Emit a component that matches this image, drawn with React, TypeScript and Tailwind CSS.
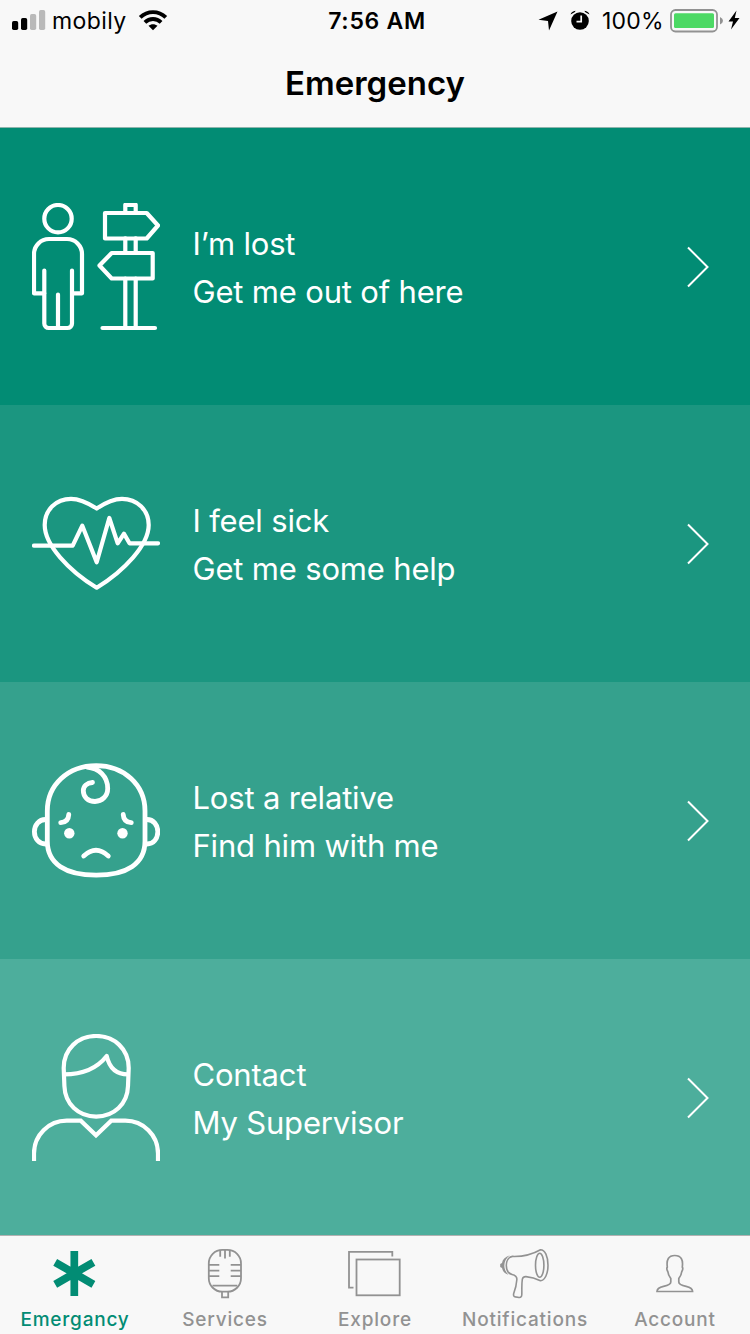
import React from 'react'

const LostIcon = () => (
  <svg
    viewBox="0 0 128 128"
    className="size-32 shrink-0"
    fill="none"
    stroke="currentColor"
    strokeWidth="4.2"
    strokeLinecap="round"
    strokeLinejoin="round"
  >
    <circle cx="26" cy="15.7" r="13.7" />
    <path d="M12.3 67.5V120.5a4.5 4.5 0 0 0 4.5 4.5H35.5a4.5 4.5 0 0 0 4.5-4.5V67.5M26 91.5V125" />
    <path d="M12.3 90.3H2V51a15 15 0 0 1 15-15H35a15 15 0 0 1 15 15V90.3H40" />
    <path d="M93.3 10V1.8H103.7V10M93.3 35.3V50M103.7 35.3V50M93.3 75.5V125M103.7 75.5V125" />
    <path d="M73 10H114.7L126 22.5L114.7 35.5H73Z" />
    <path d="M120.7 50H79.7L67.5 62.5L79.7 75.5H120.7Z" />
    <path d="M70.5 125H123" />
  </svg>
)

const HeartIcon = () => (
  <svg
    viewBox="0 0 128 128"
    className="size-32 shrink-0"
    fill="none"
    stroke="currentColor"
    strokeWidth="4.2"
    strokeLinecap="round"
    strokeLinejoin="round"
  >
    <path d="M64.7 28.5C56 23 47 18.9 39 18.9C24 18.9 12.7 30 12.7 45C12.7 65 37 91 64.7 107.7C92 91 116.7 65 116.7 45C116.7 30 105 18.9 90 18.9C82 18.9 73 23 64.7 28.5Z" />
    <path d="M2 65.6H40.7L50.3 45.7L64.7 82.3L77.3 38L85.7 63.3L92 53.7L97.5 63.3H126" />
  </svg>
)

const ChildIcon = () => (
  <svg
    viewBox="0 0 128 128"
    className="size-32 shrink-0"
    fill="none"
    stroke="currentColor"
    strokeWidth="4.8"
    strokeLinecap="round"
  >
    <path d="M64.2 8.7C36 8.7 15.3 28 15.3 54V84C15.3 107 34 118.2 64.2 118.2S113 107 113 84V54C113 28 92 8.7 64.2 8.7Z" />
    <path d="M13.5 62.5C7 62.5 2.4 68 2.4 74.8S7 87 13.5 87M115 62.5C121.5 62.5 125.8 68 125.8 74.8S121.5 87 115 87" />
    <path d="M55 10C67 11 75.7 19.5 75.7 31.5C75.7 39 70 44.5 63 44.5C56 44.5 51.3 39.8 51.3 33.8C51.3 29 55 25.8 60.5 25.5" />
    <path d="M36.8 57.5Q36.3 65.3 28.7 65.7M91.2 57.5Q91.7 65.3 99.3 65.7M51.7 99Q64 87.5 76.3 99" />
    <circle cx="37.3" cy="76.3" r="5.2" fill="currentColor" stroke="none" />
    <circle cx="90.5" cy="76.3" r="5.2" fill="currentColor" stroke="none" />
  </svg>
)

const SupervisorIcon = () => (
  <svg viewBox="0 0 128 128" className="size-32 shrink-0" fill="none" stroke="currentColor" strokeWidth="4.2">
    <path d="M31.7 34C31.7 15 46 2 64.2 2S96.7 15 96.7 34L96 52C95.5 70 82 82.6 64.2 82.6S33 70 32.4 52Z" />
    <path d="M32 40.4C50 40.4 65 34.5 74.7 22C77.5 34.5 85 40.4 96 40.4" strokeLinejoin="round" />
    <path d="M2 127V119.4A32.7 32.7 0 0 1 34.7 86.7H48.7L64 101.3L79.3 86.7H93.3A32.7 32.7 0 0 1 126 119.4V127" />
  </svg>
)

const AsteriskIcon = () => (
  <svg viewBox="0 0 60 56" className="h-14 w-[60px]" stroke="currentColor" strokeWidth="7.7">
    <path d="M29.3 6V51M10.2 39.3L48.4 17.3M10.2 17.3L48.4 39.3" />
  </svg>
)

const MicIcon = () => (
  <svg viewBox="0 0 60 56" className="h-14 w-[60px]" fill="none" stroke="currentColor" strokeWidth="1.8">
    <rect x="13.8" y="4.9" width="32.2" height="41.8" rx="13.5" />
    <path d="M17.5 40.7H42.3M14 19.8H24.3M14 25.7H24.3M14 31.2H24.3M35.7 19.8H46M35.7 25.7H46M35.7 31.2H46" />
    <path d="M25.2 5V11.7M30 5V13.5M34.8 5V11.7M27 46.7V52.3H33.2V46.7" />
  </svg>
)

const ExploreIcon = () => (
  <svg viewBox="0 0 60 56" className="h-14 w-[60px]" fill="none" stroke="currentColor" strokeWidth="1.8">
    <path d="M8.5 42.7H4V6.9H47.3V11.5" />
    <rect x="11.5" y="14.5" width="43.2" height="35.8" />
  </svg>
)

const MegaphoneIcon = () => (
  <svg
    viewBox="0 0 60 56"
    className="h-14 w-[60px]"
    fill="none"
    stroke="currentColor"
    strokeWidth="1.6"
    strokeLinejoin="round"
  >
    <path d="M45.5 4.7C38 9 28 11.7 17.5 11.4C13.5 12 11.3 16 11.3 20.5C11.3 25 13 28.5 17 29.5C20.5 30.3 22.3 32 21.8 35C21.5 40 20 45 18.7 48.5C18.2 50.5 18.8 51.5 20.5 51.9L24 52.5C26 52.7 26.7 51.5 26.8 49.5C27 44 26.5 40 27.3 34.5C27.6 32 28.5 31.5 31 31.6C36 32 41 33.5 45.5 35.8C50 35.5 53 28.5 53 20.2C53 11.5 50 4.7 45.5 4.7Z" />
    <ellipse cx="44.7" cy="20.3" rx="4.2" ry="12" />
    <path
      d="M14.8 10.2C10 11.8 7.5 14.5 7 18L5.2 19V22L7 23C7.8 26.5 10 29 13.5 29.8C7.5 24 8 15.5 14.8 10.2Z"
      fill="currentColor"
      stroke="none"
    />
  </svg>
)

const AccountIcon = () => (
  <svg viewBox="0 0 60 56" className="h-14 w-[60px]" fill="none" stroke="currentColor" strokeWidth="1.7">
    <path d="M12 46.5C12 43.5 15 42 18.5 41.3C23 40.4 25.8 39.5 25.8 37V33.5C24 31 23 29 22.8 26.5C21.7 25 21.5 23.5 22.3 22C21.3 14.5 23.5 10.5 29.8 10.5S38.3 14.5 37.3 22C38.1 23.5 37.9 25 36.8 26.5C36.6 29 35.6 31 33.8 33.5V37C33.8 39.5 36.6 40.4 41.1 41.3C44.6 42 47.6 43.5 47.6 46.5Z" />
  </svg>
)

const StatusBar = () => (
  <div className="flex h-[42px] items-center">
    {/* Carrier */}
    <div className="flex w-[270px] items-center pl-3">
      <svg viewBox="0 0 34 22" className="mb-0.5 h-[22px] w-[34px]">
        <rect x="0" y="12" width="6.2" height="9" rx="1.7" />
        <rect x="9" y="9" width="6.2" height="12" rx="1.7" />
        <rect x="18" y="5" width="6.2" height="16" rx="1.7" fill="#b9b9b9" />
        <rect x="27" y="1" width="6.2" height="20" rx="1.7" fill="#b9b9b9" />
      </svg>
      <span className="ml-1.5 w-[74px] text-[23px] tracking-[0.4px]">mobily</span>
      <svg viewBox="0 0 30 22" className="mb-0.5 ml-3 h-[22px] w-[30px]" fill="none" stroke="#000" strokeWidth="3.9">
        <path d="M2.2 8.4C9.5 1.3 20.5 1.3 27.8 8.4M6.9 13.3C11.5 8.9 18.5 8.9 23.1 13.3" />
        <path d="M15 21.2L10.5 16.8C13 14.6 17 14.6 19.5 16.8Z" fill="#000" stroke="none" />
      </svg>
    </div>
    <span className="w-[214px] text-center text-[23px] font-semibold tracking-[0.7px]">7:56 AM</span>
    {/* Indicators */}
    <div className="flex flex-1 items-center justify-end pr-[10px]">
      <svg viewBox="0 0 20 20" className="mr-px size-5">
        <path d="M19.5 0.5L11 19.5L10 10L0.5 8.8Z" />
      </svg>
      <svg viewBox="0 0 20 20" className="mb-0.5 ml-[11px] size-5">
        <circle cx="10" cy="11" r="8.8" />
        <path d="M0.5 4.5Q1.5 1.2 5.5 0.8L5 2ZM19.5 4.5Q18.5 1.2 14.5 0.8L15 2Z" />
        <path d="M11.2 5.5V11.6H6.5" fill="none" stroke="#f8f8f8" strokeWidth="1.7" />
      </svg>
      <span className="ml-3 w-[64px] text-[23px] tracking-[0.2px]">100%</span>
      <svg viewBox="0 0 54 24" className="ml-1 h-6 w-[54px]">
        <rect x="1" y="1" width="46" height="21.5" rx="4.5" fill="none" stroke="#929292" strokeWidth="1.8" />
        <rect x="4" y="4.3" width="40" height="14.8" rx="1.5" fill="#4cd964" />
        <path d="M50 8Q53 9.5 53 11.7T50 15.5Z" fill="#929292" />
      </svg>
      <svg viewBox="0 0 12 20" className="mb-0.5 ml-1 h-5 w-3">
        <path d="M8.5 0.5L0.5 11.5H5L3 19.5L11.5 8H6.8Z" />
      </svg>
    </div>
  </div>
)

const rows = [
  { title: 'I’m lost', subtitle: 'Get me out of here', icon: <LostIcon />, className: 'bg-[#028c74]' },
  { title: 'I feel sick', subtitle: 'Get me some help', icon: <HeartIcon />, className: 'bg-[#1b9680]' },
  { title: 'Lost a relative', subtitle: 'Find him with me', icon: <ChildIcon />, className: 'bg-[#35a18d]' },
  { title: 'Contact', subtitle: 'My Supervisor', icon: <SupervisorIcon />, className: 'bg-[#4dae9c]' },
]

const tabs = [
  { label: 'Emergancy', icon: <AsteriskIcon />, className: 'text-[#028c74]' },
  { label: 'Services', icon: <MicIcon />, className: 'text-[#929292]' },
  { label: 'Explore', icon: <ExploreIcon />, className: 'text-[#929292]' },
  { label: 'Notifications', icon: <MegaphoneIcon />, className: 'text-[#929292]' },
  { label: 'Account', icon: <AccountIcon />, className: 'text-[#929292]' },
]

const App = () => {
  return (
    <div className="flex h-[1334px] w-[750px] flex-col overflow-hidden bg-[#f8f8f8] font-['Inter',sans-serif] text-black">
      {/* Header */}
      <header className="h-32 shrink-0 border-b border-[#8fb5ad]">
        <StatusBar />
        <h1 className="pt-4 text-center text-[33px] leading-[50px] font-semibold">Emergency</h1>
      </header>
      {/* Emergency options */}
      <main className="flex flex-col">
        {rows.map((row) => (
          <button
            key={row.title}
            className={`flex h-[277px] w-full items-start pt-[75px] pl-8 text-left text-white last:h-[276px] ${row.className}`}
          >
            {row.icon}
            <div className="mt-[17px] ml-8 flex-1 pl-[0.5px] text-[31px] leading-[48px] tracking-[-0.18px]">
              <p>{row.title}</p>
              <p>{row.subtitle}</p>
            </div>
            <svg
              viewBox="0 0 24 44"
              className="mt-[42px] mr-10 h-11 w-6"
              fill="none"
              stroke="currentColor"
              strokeWidth="2"
            >
              <path d="M2 2.5L21.5 22L2 41.5" />
            </svg>
          </button>
        ))}
      </main>
      {/* Tab bar */}
      <nav className="grid flex-1 grid-cols-5 border-t border-[#b2b2b2]">
        {tabs.map((tab) => (
          <div key={tab.label} className={`flex flex-col items-center pt-[9px] ${tab.className}`}>
            {tab.icon}
            <span className="mt-[7px] text-[19px] leading-6 font-medium tracking-[0.8px]">{tab.label}</span>
          </div>
        ))}
      </nav>
    </div>
  )
}

export default App
